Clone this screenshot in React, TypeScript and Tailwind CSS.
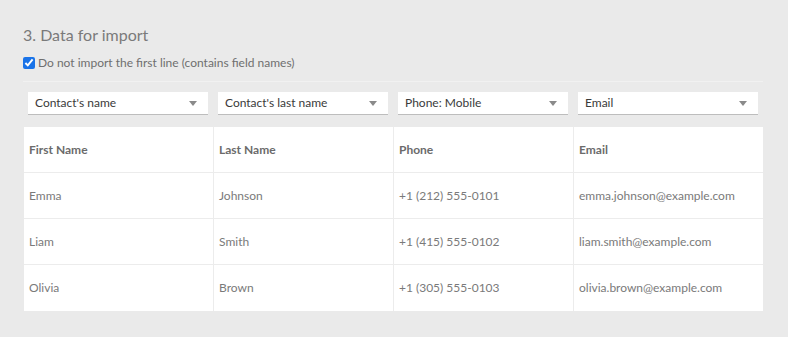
import React from "react";

const cols = "grid grid-cols-[189px_180px_180px_190px]";

const selects = ["Contact's name", "Contact's last name", "Phone: Mobile", "Email"];
const headers = ["First Name", "Last Name", "Phone", "Email"];
const rows = [
  ["Emma", "Johnson", "+1 (212) 555-0101", "emma.johnson@example.com"],
  ["Liam", "Smith", "+1 (415) 555-0102", "liam.smith@example.com"],
  ["Olivia", "Brown", "+1 (305) 555-0103", "olivia.brown@example.com"],
];

function Select({ label }: { label: string }) {
  return (
    <div className="h-[23px] bg-white border-b border-[#bdbdbd] flex items-center justify-between pl-[7px] pr-[11px] text-[12px] text-[#3a3a3a]">
      <span>{label}</span>
      <svg width="8" height="5" viewBox="0 0 8 5">
        <path d="M0 0 H8 L4 5 Z" fill="#8a8a8a" />
      </svg>
    </div>
  );
}

export default function App() {
  return (
    <div
      className="w-[788px] h-[337px] bg-[#eaeaea] pl-[23px] pr-[25px] pt-[23px]"
      style={{ fontFamily: 'Lato, "Noto Sans", sans-serif' }}
    >
      <h2 className="text-[16px] leading-[24px] text-[#7a7a7a]">3. Data for import</h2>
      <label className="mt-[8px] flex items-center h-[16px] text-[12px] text-[#6f6f6f]">
        <input type="checkbox" defaultChecked className="m-0 mr-[3px] w-[12px] h-[12px] accent-[#1a73e8]" />
        Do not import the first line (contains field names)
      </label>
      <div className="mt-[10px] h-px bg-[#f1f1f1]" />
      <div className="ml-px">
        <div className={`${cols} mt-[10px]`}>
          {selects.map((s, i) => (
            <div key={s} className={i === 0 ? "pl-[4px] pr-[5px]" : "px-[5px]"}>
              <Select label={s} />
            </div>
          ))}
        </div>
        <div className="mt-[12px] bg-white w-[739px]">
          <div className={`${cols} h-[46px] border-b border-[#ececec]`}>
            {headers.map((h, i) => (
              <div
                key={h}
                className={`flex items-center pl-[5px] text-[12px] font-bold text-[#6b6b6b] ${i > 0 ? "border-l border-[#ececec]" : ""}`}
              >
                {h}
              </div>
            ))}
          </div>
          {rows.map((r, ri) => (
            <div
              key={ri}
              className={`${cols} h-[46px] ${ri < rows.length - 1 ? "border-b border-[#ececec]" : ""}`}
            >
              {r.map((c, i) => (
                <div
                  key={i}
                  className={`flex items-center pl-[5px] text-[12px] text-[#7a7a7a] ${i > 0 ? "border-l border-[#ececec]" : ""}`}
                >
                  {c}
                </div>
              ))}
            </div>
          ))}
        </div>
      </div>
    </div>
  );
}
